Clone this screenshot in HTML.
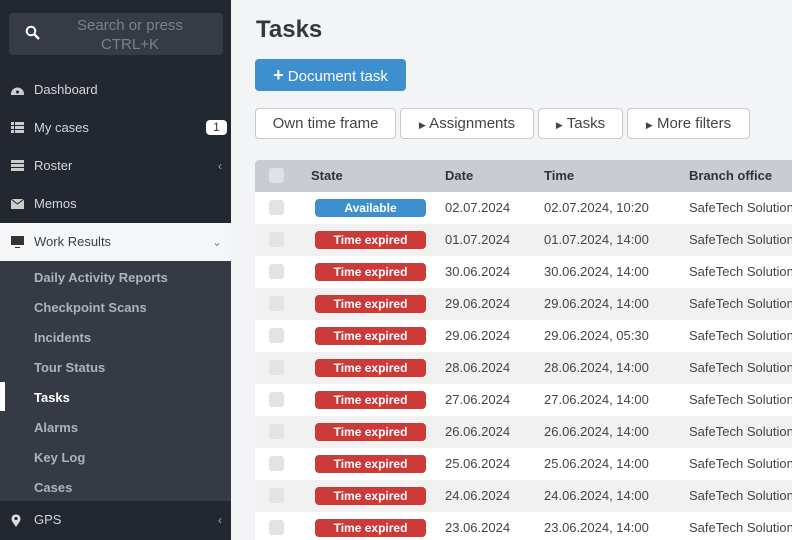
<!DOCTYPE html>
<html><head><meta charset="utf-8"><style>
*{box-sizing:border-box;margin:0;padding:0}
html,body{width:792px;height:540px;overflow:hidden}
body{background:#f2f4f6;font-family:"Liberation Sans",Arial,sans-serif;position:relative;white-space:nowrap}
.sb{position:absolute;left:0;top:0;width:231px;height:540px;background:#23272f}
.search{position:absolute;left:9px;top:13px;width:214px;height:42px;background:#373b45;border-radius:4px;color:#7b8089;font-size:15px;text-align:center;line-height:19px;padding-top:3px;padding-left:28px}
.search svg{position:absolute;left:16px;top:12px}
.item{position:absolute;left:0;width:231px;height:38px;color:#d3d6db;font-size:13px;line-height:38px;padding-left:34px}
.item svg{position:absolute;left:11px;top:13px}
.item .chev{position:absolute;right:9px;top:0;font-size:12px;color:#aaa}
.act{background:#f5f6f8;color:#3b3f46}
.sub{position:absolute;left:0;top:261px;width:231px;height:240px;background:#363a44}
.si{position:absolute;left:34px;font-size:13px;color:#aeb2b9;font-weight:bold}
.badge{position:absolute;right:4px;top:11px;width:21px;height:15px;background:#fff;border-radius:4px;color:#333;font-size:12px;line-height:15px;text-align:center}
h1{position:absolute;left:256px;top:16px;font-size:24px;color:#34383e;font-weight:bold}
.btn{position:absolute;left:255px;top:59px;width:151px;height:32px;background:#3d8fcd;border-radius:4px;color:#fff;font-size:15px;line-height:32px;text-align:center}
.f{position:absolute;top:108px;height:31px;border:1px solid #c6c9cd;border-radius:4px;background:#fff;color:#444;font-size:15px;line-height:29px;text-align:center}
.tbl{position:absolute;left:255px;top:160px;width:537px;height:380px;overflow:hidden}
.row{position:relative;height:32px;font-size:13px;color:#444;line-height:32px}
.row span{position:absolute}
.hd{background:#c9ccd2;font-weight:bold;color:#333;border-radius:4px 0 0 0}
.cb{position:absolute;left:14px;top:8px;width:15px;height:15px;background:#e2e3e5;border-radius:3px}
.hd .cb{background:#dfe1e4}
.g{background:#f1f1f1}.w{background:#fff}
.pill{position:absolute;left:60px;top:7px;width:111px;height:18px;border-radius:4px;color:#fff;font-weight:bold;font-size:12px;line-height:18px;text-align:center;background:#cc3a3a}
.pill.av{background:#3d8fcd}
</style></head><body>
<div class="sb">
<div class="search"><svg width="16" height="16" viewBox="0 0 16 16"><circle cx="6" cy="6" r="4.3" fill="none" stroke="#fff" stroke-width="2"/><path d="M9 9l5 5" stroke="#fff" stroke-width="2.4"/></svg>Search or press<br>CTRL+K</div>
<div class="item" style="top:71px"><svg width="13" height="12" viewBox="0 0 13 12"><path d="M0 10a6.5 6.5 0 0113 0v1H0z" fill="#ccc"/><circle cx="6.5" cy="8" r="1.5" fill="#23272f"/></svg>Dashboard</div>
<div class="item" style="top:109px"><svg width="13" height="11" viewBox="0 0 13 11"><path d="M0 0h3v3H0zM4 0h9v3H4zM0 4h3v3H0zM4 4h9v3H4zM0 8h3v3H0zM4 8h9v3H4z" fill="#ccc"/></svg>My cases<div class="badge">1</div></div>
<div class="item" style="top:147px"><svg width="13" height="11" viewBox="0 0 13 11"><path d="M0 0h13v3H0zM0 4h13v3H0zM0 8h13v3H0z" fill="#ccc"/></svg>Roster<span class="chev">‹</span></div>
<div class="item" style="top:185px"><svg width="13" height="11" viewBox="0 0 13 11"><path d="M0 1h13v10H0z" fill="#ccc"/><path d="M0 1l6.5 5L13 1" stroke="#23272f" fill="none"/></svg>Memos</div>
<div class="item act" style="top:223px"><svg width="13" height="12" viewBox="0 0 13 12"><path d="M0 0h13v9H0z" fill="#333"/><path d="M4 11h5v1H4z" fill="#333"/></svg>Work Results<span class="chev" style="color:#888">⌄</span></div>
<div class="sub">
<div class="si" style="top:9px">Daily Activity Reports</div>
<div class="si" style="top:39px">Checkpoint Scans</div>
<div class="si" style="top:69px">Incidents</div>
<div class="si" style="top:99px">Tour Status</div>
<div style="position:absolute;left:0;top:121px;width:5px;height:29px;background:#fff"></div>
<div class="si" style="top:129px;color:#fff">Tasks</div>
<div class="si" style="top:159px">Alarms</div>
<div class="si" style="top:189px">Key Log</div>
<div class="si" style="top:219px">Cases</div>
</div>
<div class="item" style="top:501px;background:#23272f"><svg width="10" height="13" viewBox="0 0 10 13"><path d="M5 13L1 7a4.5 4.5 0 118 0z" fill="#ddd"/><circle cx="5" cy="4.5" r="1.6" fill="#23272f"/></svg>GPS<span class="chev">‹</span></div>
</div>
<h1>Tasks</h1>
<div class="btn"><b style="font-size:18px">+</b> Document task</div>
<div class="f" style="left:255px;width:141px">Own time frame</div>
<div class="f" style="left:400px;width:134px"><span style="font-size:9px">▶</span> Assignments</div>
<div class="f" style="left:538px;width:85px"><span style="font-size:9px">▶</span> Tasks</div>
<div class="f" style="left:627px;width:123px"><span style="font-size:9px">▶</span> More filters</div>
<div class="tbl">
<div class="row hd"><div class="cb"></div><span style="left:56px">State</span><span style="left:190px">Date</span><span style="left:289px">Time</span><span style="left:434px">Branch office</span></div>
<div class="row w"><div class="cb"></div><div class="pill av">Available</div><span style="left:190px">02.07.2024</span><span style="left:289px">02.07.2024, 10:20</span><span style="left:434px">SafeTech Solutions</span></div>
<div class="row g"><div class="cb"></div><div class="pill">Time expired</div><span style="left:190px">01.07.2024</span><span style="left:289px">01.07.2024, 14:00</span><span style="left:434px">SafeTech Solutions</span></div>
<div class="row w"><div class="cb"></div><div class="pill">Time expired</div><span style="left:190px">30.06.2024</span><span style="left:289px">30.06.2024, 14:00</span><span style="left:434px">SafeTech Solutions</span></div>
<div class="row g"><div class="cb"></div><div class="pill">Time expired</div><span style="left:190px">29.06.2024</span><span style="left:289px">29.06.2024, 14:00</span><span style="left:434px">SafeTech Solutions</span></div>
<div class="row w"><div class="cb"></div><div class="pill">Time expired</div><span style="left:190px">29.06.2024</span><span style="left:289px">29.06.2024, 05:30</span><span style="left:434px">SafeTech Solutions</span></div>
<div class="row g"><div class="cb"></div><div class="pill">Time expired</div><span style="left:190px">28.06.2024</span><span style="left:289px">28.06.2024, 14:00</span><span style="left:434px">SafeTech Solutions</span></div>
<div class="row w"><div class="cb"></div><div class="pill">Time expired</div><span style="left:190px">27.06.2024</span><span style="left:289px">27.06.2024, 14:00</span><span style="left:434px">SafeTech Solutions</span></div>
<div class="row g"><div class="cb"></div><div class="pill">Time expired</div><span style="left:190px">26.06.2024</span><span style="left:289px">26.06.2024, 14:00</span><span style="left:434px">SafeTech Solutions</span></div>
<div class="row w"><div class="cb"></div><div class="pill">Time expired</div><span style="left:190px">25.06.2024</span><span style="left:289px">25.06.2024, 14:00</span><span style="left:434px">SafeTech Solutions</span></div>
<div class="row g"><div class="cb"></div><div class="pill">Time expired</div><span style="left:190px">24.06.2024</span><span style="left:289px">24.06.2024, 14:00</span><span style="left:434px">SafeTech Solutions</span></div>
<div class="row w"><div class="cb"></div><div class="pill">Time expired</div><span style="left:190px">23.06.2024</span><span style="left:289px">23.06.2024, 14:00</span><span style="left:434px">SafeTech Solutions</span></div>
</div>
</body></html>
